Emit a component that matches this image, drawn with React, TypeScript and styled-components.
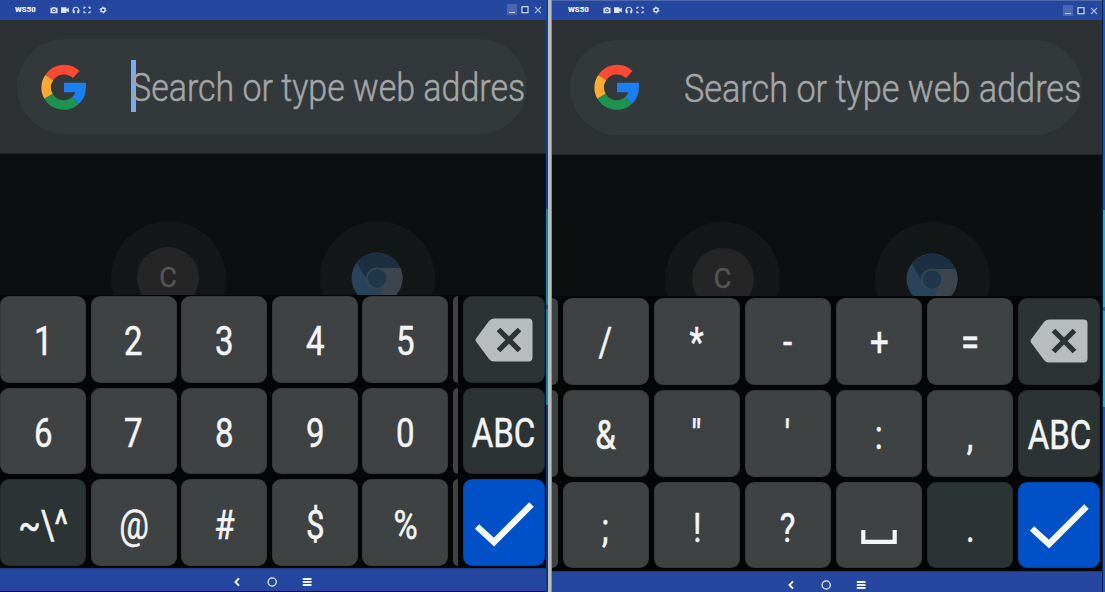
import React from 'react';
import styled, { createGlobalStyle, css } from 'styled-components';

const GlobalStyle = createGlobalStyle`
  * { box-sizing: border-box; }
  html, body { margin: 0; padding: 0; background: #07090a; overflow: hidden; }
  body { font-family: Roboto, "Liberation Sans", sans-serif; }
`;

const Desktop = styled.main`
  display: flex;
  width: 1105px;
  height: 592px;
  overflow: hidden;
`;

const Device = styled.section<{ $width: number; $topEdge: number }>`
  display: flex;
  flex-direction: column;
  flex: none;
  width: ${p => p.$width}px;
  height: 592px;
  background: #040507;
  border-top: ${p => p.$topEdge}px solid #4d68ae;
`;

const WindowEdge = styled.div<{ $width: number; $bright?: boolean }>`
  flex: none;
  width: ${p => p.$width}px;
  background: ${p =>
    p.$bright
      ? 'linear-gradient(#1459cf 0 210px, #14b4dc 210px 307px, #1470d8 307px 311px, #14b4dc 311px 407px, #1459cf 407px)'
      : 'linear-gradient(#06459a 0 209px, #0886ac 209px 305px, #07529c 305px 309px, #0886ac 309px 405px, #063a78 405px)'};
  border-left: ${p => (p.$bright ? '1px solid #0a2140' : 'none')};
`;

const Divider = styled.div`
  flex: none;
  width: 4px;
  background: #bcbcbc;
  border-right: 1px solid #8c8e91;
`;

const TitleBar = styled.header<{ $height: number; $left: number }>`
  display: flex;
  align-items: center;
  flex: none;
  height: ${p => p.$height}px;
  padding: 0 3px 1px ${p => p.$left}px;
  background: #2547a0;
  color: #dfe5f6;
`;

const DeviceName = styled.span`
  width: 34.5px;
  font-size: 7.8px;
  font-weight: 800;
  line-height: 10px;
  color: #fff;
`;

const Tools = styled.div`
  display: flex;
  align-items: center;
  gap: 3px;
  svg { width: 8px; height: 8px; display: block; }
  svg:last-child { margin-left: 5px; }
`;

const WindowButtons = styled.div`
  display: flex;
  align-items: center;
  gap: 3px;
  margin-left: auto;
  svg { width: 10px; height: 11px; display: block; }
`;

const SearchArea = styled.div<{ $height: number; $left: number; $top: number }>`
  flex: none;
  height: ${p => p.$height}px;
  padding: ${p => p.$top}px 0 0 ${p => p.$left}px;
  background: #2d3133;
  border-bottom: 1px solid #1f2324;
`;

const SearchBox = styled.div<{ $width: number }>`
  display: flex;
  align-items: center;
  width: ${p => p.$width}px;
  height: 95px;
  padding-left: 24px;
  border-radius: 48px;
  background: #33383a;
`;

const Logo = styled.svg`
  flex: none;
  width: 46px;
  height: 46px;
`;

const Caret = styled.i<{ $visible: boolean }>`
  flex: none;
  width: 5px;
  height: 52px;
  margin: 0 0 2px 44px;
  background: ${p => (p.$visible ? '#77acf2' : 'transparent')};
`;

const Placeholder = styled.span<{ $stretch: number }>`
  flex: none;
  width: 392px;
  margin-left: -4.6px;
  padding-top: 3px;
  font-size: 39.5px;
  font-weight: 300;
  line-height: 48px;
  white-space: nowrap;
  color: #a3a6a7;
  -webkit-text-stroke: 0.5px #a3a6a7;
  transform: scaleX(${p => p.$stretch});
  transform-origin: 0 50%;
`;

const Shortcuts = styled.div<{ $height: number; $left: number; $gap: number }>`
  display: flex;
  flex: none;
  gap: ${p => p.$gap}px;
  height: ${p => p.$height}px;
  padding: 66.5px 0 0 ${p => p.$left}px;
  overflow: hidden;
  background: #0b0f10;
`;

const Shortcut = styled.div`
  display: flex;
  align-items: center;
  justify-content: center;
  flex: none;
  width: 115px;
  height: 115px;
  border-radius: 50%;
  background: #131717;
`;

const Monogram = styled.span`
  display: grid;
  place-items: center;
  width: 62px;
  height: 62px;
  border-radius: 50%;
  background: #252525;
  color: #555656;
  font-size: 27px;
  font-weight: 400;
  -webkit-text-stroke: 0.4px #555656;
  line-height: 60px;
`;

const Keyboard = styled.div<{ $height: number; $gapTop: number; $rowGap: number }>`
  --row-gap: ${p => p.$rowGap}px;
  display: flex;
  flex: none;
  height: ${p => p.$height}px;
  padding-top: ${p => p.$gapTop}px;
  background: #040507;
`;

const KeyGrid = styled.div<{ $pitch: number; $left: number }>`
  display: grid;
  grid-template-columns: repeat(5, 86px);
  grid-template-rows: repeat(3, 86.6px);
  column-gap: ${p => p.$pitch - 86}px;
  row-gap: var(--row-gap);
  margin-left: ${p => p.$left}px;
`;

const KeyColumn = styled.div<{ $width: number; $left: number }>`
  display: grid;
  flex: none;
  grid-template-rows: repeat(3, 86.6px);
  row-gap: var(--row-gap);
  width: ${p => p.$width}px;
  margin-left: ${p => p.$left}px;
`;

type Tone = 'plain' | 'dark' | 'accent';
const tones: Record<Tone, string> = { plain: '#3e4243', dark: '#2c3335', accent: '#0050c8' };

const Key = styled.button<{ $tone?: Tone; $drop?: number }>`
  display: flex;
  align-items: center;
  justify-content: center;
  min-width: 0;
  padding: ${p => p.$drop ?? 0}px 0 0;
  border: 1px solid rgba(0, 0, 0, 0.12);
  border-radius: 9px;
  background: ${p => tones[p.$tone ?? 'plain']};
  color: #f4f5f5;
  font: 400 40px/48px Roboto, "Liberation Sans", sans-serif;
  svg { display: block; flex: none; }
`;

const KeySliver = styled.div<{ $side: 'left' | 'right' }>`
  background: #3e4243;
  ${p =>
    p.$side === 'left'
      ? css`border-radius: 0 8px 8px 0;`
      : css`border-radius: 8px 0 0 8px;`}
`;

const Glyph = styled.span`
  padding-top: 4px;
  -webkit-text-stroke: 0.5px #f4f5f5;
  transform: scaleX(0.825);
  white-space: nowrap;
`;

const NavBar = styled.nav<{ $height: number; $left: number; $top: number }>`
  display: flex;
  align-items: flex-start;
  flex: none;
  gap: 24.8px;
  height: ${p => p.$height}px;
  padding: ${p => p.$top}px 0 0 ${p => p.$left}px;
  background: #2547a0;
  border-top: 1px solid #1d3881;
  svg { width: 10.5px; height: 10px; display: block; }
`;

const GoogleLogo = () => (
  <Logo viewBox="0 0 46 46" fill="none" strokeWidth="9.6">
    <path d="M8.3 13.6 A17.6 17.6 0 0 1 35.2 10.5" stroke="#fb4934" />
    <path d="M7.5 32.3 A17.6 17.6 0 0 1 8.3 13.6" stroke="#fbab34" />
    <path d="M34.5 36.4 A17.6 17.6 0 0 1 7.5 32.3" stroke="#1f9150" />
    <path d="M23 23.5 H40.2 A17.6 17.6 0 0 1 34.5 36.4" stroke="#1a80f2" />
  </Logo>
);

const BrowserIcon = () => (
  <svg width="52" height="52" viewBox="0 0 52 52">
    <circle cx="26" cy="26" r="25.5" fill="#29435a" />
    <path d="M26 16 H49.5 A25.5 25.5 0 0 1 26 51.5 L34 31 Z" fill="#3c454c" />
    <path d="M6 11 A25.5 25.5 0 0 1 49.5 16 H26 L16 28 Z" fill="#1a3042" />
    <circle cx="26" cy="26.5" r="11" fill="#344654" />
    <circle cx="26" cy="26.5" r="9.2" fill="#1f364b" />
  </svg>
);

const Backspace = () => (
  <svg width="58" height="44" viewBox="0 0 58 44">
    <path d="M1 20.5 L14 3 Q16 .5 19 .5 H53.5 Q57.5 .5 57.5 4.5 V39.5 Q57.5 43.5 53.5 43.5 H19 Q16 43.5 14 41 L1 23.5 Q0 22 1 20.5Z" fill="#b8bcbe" />
    <path d="M23.5 11.5 L44.5 32.5 M44.5 11.5 L23.5 32.5" stroke="#2c3335" strokeWidth="5.2" />
  </svg>
);

const Check = () => (
  <svg width="60" height="46" viewBox="0 0 60 46" fill="none">
    <path d="M3 25.5 L20 41 L57.5 3.5" stroke="#f8fafc" strokeWidth="6.4" />
  </svg>
);

const SpaceMark = () => (
  <svg width="36" height="14" viewBox="0 0 36 14" fill="none">
    <path d="M2.3 0 V11.8 H33.7 V0" stroke="#f4f5f5" strokeWidth="4.2" />
  </svg>
);

const SpaceHolder = styled.span`
  padding-top: 21px;
`;

const WindowChrome = ({ height, left }: { height: number; left: number }) => (
  <TitleBar $height={height} $left={left}>
    <DeviceName>WS50</DeviceName>
    <Tools>
      <svg viewBox="0 0 8 8">
        <path fillRule="evenodd" fill="currentColor" d="M.5 1.8H2.2L3 .9H5L5.8 1.8H7.5V7.2H.5ZM4 2.6A1.8 1.8 0 1 0 4 6.2A1.8 1.8 0 1 0 4 2.6ZM4 3.5A.9.9 0 1 1 4 5.3A.9.9 0 1 1 4 3.5Z" />
      </svg>
      <svg viewBox="0 0 8 8">
        <path fill="currentColor" d="M0 1.2H5.5V3.2L7.8 1.6V6.6L5.5 5V7H0Z" />
      </svg>
      <svg viewBox="0 0 8 8">
        <path fill="none" stroke="currentColor" strokeWidth="1.1" d="M1.2 5V4A2.8 2.8 0 0 1 6.8 4V5" />
        <path fill="currentColor" d="M.7 4.3H2.7V7.2H1.4L.7 6.5ZM5.3 4.3H7.3V6.5L6.6 7.2H5.3Z" />
      </svg>
      <svg viewBox="0 0 8 8" fill="none" stroke="currentColor" strokeWidth="1.1">
        <path d="M1 3V1.2H2.8M5.2 1.2H7V3M7 5V6.8H5.2M2.8 6.8H1V5" />
      </svg>
      <svg viewBox="0 0 8 8" fill="none" stroke="currentColor">
        <circle cx="4" cy="4" r="2" strokeWidth="1.3" />
        <circle cx="4" cy="4" r="3" strokeWidth="1" strokeDasharray="1.57 1.57" />
      </svg>
    </Tools>
    <WindowButtons>
      <svg viewBox="0 0 10 11">
        <path d="M0 0H10V11H0Z" fill="#4b65b0" />
        <path d="M2 8.5H8" stroke="#c5d0ee" />
      </svg>
      <svg viewBox="0 0 10 11">
        <rect x="2" y="2.7" width="6" height="6" fill="#17398f" stroke="#d5def5" strokeWidth="1.2" />
      </svg>
      <svg viewBox="0 0 10 11">
        <path d="M2 3L8 9M8 3L2 9" stroke="#aebce3" strokeWidth="1.1" />
      </svg>
    </WindowButtons>
  </TitleBar>
);

const Navigation = (props: { height: number; left: number; top: number }) => (
  <NavBar $height={props.height} $left={props.left} $top={props.top}>
    <svg viewBox="0 0 10.5 10" fill="none" stroke="#fff" strokeWidth="1.8">
      <path d="M7 1.4L3.4 5L7 8.6" />
    </svg>
    <svg viewBox="0 0 10.5 10" fill="none" stroke="#e8edfa" strokeWidth="1.3">
      <circle cx="5.2" cy="5" r="4.1" />
    </svg>
    <svg viewBox="0 0 10.5 10" stroke="#eef1fb" strokeWidth="1.9">
      <path d="M.8 2H9.5M.8 5H9.5M.8 8H9.5" />
    </svg>
  </NavBar>
);

type SearchProps = {
  height: number;
  width: number;
  left: number;
  top: number;
  stretch: number;
  focused?: boolean;
};

const Search = ({ height, width, left, top, stretch, focused = false }: SearchProps) => (
  <SearchArea $height={height} $left={left} $top={top}>
    <SearchBox $width={width}>
      <GoogleLogo />
      <Caret $visible={focused} />
      <Placeholder $stretch={stretch}>Search or type web addres</Placeholder>
    </SearchBox>
  </SearchArea>
);

const Sites = ({ height, left, gap }: { height: number; left: number; gap: number }) => (
  <Shortcuts $height={height} $left={left} $gap={gap}>
    <Shortcut><Monogram>C</Monogram></Shortcut>
    <Shortcut><BrowserIcon /></Shortcut>
  </Shortcuts>
);

const rowDrop = [0, 1.4, 3];

type KeysProps = { labels: string[]; darkKey: string; pitch: number; left?: number };

const Keys = ({ labels, darkKey, pitch, left = 0 }: KeysProps) => (
  <KeyGrid $pitch={pitch} $left={left}>
    {labels.map((label, i) => (
      <Key key={label} $tone={label === darkKey ? 'dark' : 'plain'} $drop={rowDrop[Math.floor(i / 5)]}>
        {label === 'space' ? <SpaceHolder><SpaceMark /></SpaceHolder> : <Glyph>{label}</Glyph>}
      </Key>
    ))}
  </KeyGrid>
);

const Slivers = ({ side, width, left }: { side: 'left' | 'right'; width: number; left: number }) => (
  <KeyColumn $width={width} $left={left}>
    <KeySliver $side={side} />
    <KeySliver $side={side} />
    <KeySliver $side={side} />
  </KeyColumn>
);

const ActionKeys = ({ left }: { left: number }) => (
  <KeyColumn $width={82} $left={left}>
    <Key $tone="dark"><Backspace /></Key>
    <Key $tone="dark" $drop={1.4}><Glyph>ABC</Glyph></Key>
    <Key $tone="accent" $drop={2}><Check /></Key>
  </KeyColumn>
);

const numberKeys = ['1', '2', '3', '4', '5', '6', '7', '8', '9', '0', '~\\^', '@', '#', '$', '%'];
const symbolKeys = ['/', '*', '-', '+', '=', '&', '"', "'", ':', ',', ';', '!', '?', 'space', '.'];

export default function App() {
  return (
    <>
      <GlobalStyle />
      <Desktop>
        <Device $width={546} $topEdge={0}>
          <WindowChrome height={20} left={15} />
          <Search height={134} width={510} left={17} top={19} stretch={0.86} focused />
          <Sites height={141} left={110.5} gap={94} />
          <Keyboard $height={273} $gapTop={1.4} $rowGap={4.9}>
            <Keys labels={numberKeys} darkKey={'~\\^'} pitch={90.6} />
            <Slivers side="right" width={5} left={4.6} />
            <ActionKeys left={4.7} />
          </Keyboard>
          <Navigation height={23} left={231.5} top={8} />
        </Device>
        <WindowEdge $width={2} />
        <Divider />
        <Device $width={550} $topEdge={1}>
          <WindowChrome height={19} left={16} />
          <Search height={135} width={512} left={18} top={19.5} stretch={0.867} />
          <Sites height={141} left={113} gap={94.5} />
          <Keyboard $height={275} $gapTop={2.2} $rowGap={5.2}>
            <Slivers side="left" width={6} left={0} />
            <Keys labels={symbolKeys} darkKey="." pitch={91.1} left={4.7} />
            <ActionKeys left={5} />
          </Keyboard>
          <Navigation height={21} left={233.5} top={8} />
        </Device>
        <WindowEdge $width={3} $bright />
      </Desktop>
    </>
  );
}
